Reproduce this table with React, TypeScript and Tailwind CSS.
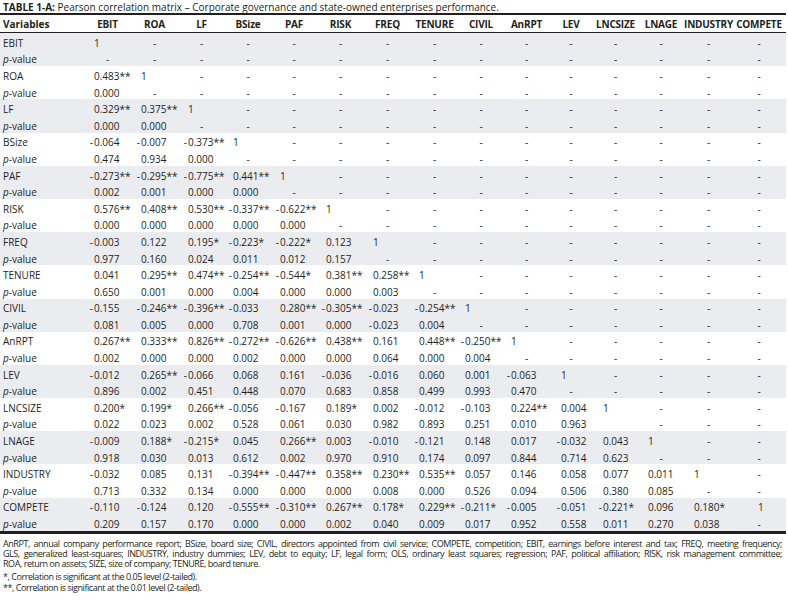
import React from "react";

const cols = ["EBIT","ROA","LF","BSize","PAF","RISK","FREQ","TENURE","CIVIL","AnRPT","LEV","LNCSIZE","LNAGE","INDUSTRY","COMPETE"];
const widths = ["w-[47px]","w-[47px]","w-[47px]","w-[46px]","w-[46px]","w-[47px]","w-[47px]","w-[47px]","w-[46px]","w-[45px]","w-[44px]","w-[45px]","w-[46px]","w-[49px]","w-[52px]"];
const pads = ["pl-[10px]","pl-[10px]","pl-[10px]","pl-[8px]","pl-[9px]","pl-[9px]","pl-[9px]","pl-[8px]","pl-[7px]","pl-[7px]","pl-[12px]","pl-[10px]","pl-[10px]","pl-[10px]","pl-[25px]"];

type Row = { name: string; r: string[]; p: string[] };
const data: Row[] = [
  { name: "EBIT", r: ["1"], p: ["-"] },
  { name: "ROA", r: ["0.483**","1"], p: ["0.000","-"] },
  { name: "LF", r: ["0.329**","0.375**","1"], p: ["0.000","0.000","-"] },
  { name: "BSize", r: ["-0.064","-0.007","-0.373**","1"], p: ["0.474","0.934","0.000","-"] },
  { name: "PAF", r: ["-0.273**","-0.295**","-0.775**","0.441**","1"], p: ["0.002","0.001","0.000","0.000","-"] },
  { name: "RISK", r: ["0.576**","0.408**","0.530**","-0.337**","-0.622**","1"], p: ["0.000","0.000","0.000","0.000","0.000","-"] },
  { name: "FREQ", r: ["-0.003","0.122","0.195*","-0.223*","-0.222*","0.123","1"], p: ["0.977","0.160","0.024","0.011","0.012","0.157","-"] },
  { name: "TENURE", r: ["0.041","0.295**","0.474**","-0.254**","-0.544*","0.381**","0.258**","1"], p: ["0.650","0.001","0.000","0.004","0.000","0.000","0.003","-"] },
  { name: "CIVIL", r: ["-0.155","-0.246**","-0.396**","-0.033","0.280**","-0.305**","-0.023","-0.254**","1"], p: ["0.081","0.005","0.000","0.708","0.001","0.000","-0.023","0.004","-"] },
  { name: "AnRPT", r: ["0.267**","0.333**","0.826**","-0.272**","-0.626**","0.438**","0.161","0.448**","-0.250**","1"], p: ["0.002","0.000","0.000","0.002","0.000","0.000","0.064","0.000","0.004","-"] },
  { name: "LEV", r: ["-0.012","0.265**","-0.066","0.068","0.161","-0.036","-0.016","0.060","0.001","-0.063","1"], p: ["0.896","0.002","0.451","0.448","0.070","0.683","0.858","0.499","0.993","0.470","-"] },
  { name: "LNCSIZE", r: ["0.200*","0.199*","0.266**","-0.056","-0.167","0.189*","0.002","-0.012","-0.103","0.224**","0.004","1"], p: ["0.022","0.023","0.002","0.528","0.061","0.030","0.982","0.893","0.251","0.010","0.963",""] },
  { name: "LNAGE", r: ["-0.009","0.188*","-0.215*","0.045","0.266**","0.003","-0.010","-0.121","0.148","0.017","-0.032","0.043","1"], p: ["0.918","0.030","0.013","0.612","0.002","0.970","0.910","0.174","0.097","0.844","0.714","0.623","-"] },
  { name: "INDUSTRY", r: ["-0.032","0.085","0.131","-0.394**","-0.447**","0.358**","0.230**","0.535**","0.057","0.146","0.058","0.077","0.011","1"], p: ["0.713","0.332","0.134","0.000","0.000","0.000","0.008","0.000","0.526","0.094","0.506","0.380","0.085","-"] },
  { name: "COMPETE", r: ["-0.110","-0.124","0.120","-0.555**","-0.310**","0.267**","0.178*","0.229**","-0.211*","-0.005","-0.051","-0.221*","0.096","0.180*","1"], p: ["0.209","0.157","0.170","0.000","0.000","0.002","0.040","0.009","0.017","0.952","0.558","0.011","0.270","0.038","-"] },
];

function Cell({ v, i }: { v: string; i: number }) {
  if (v === "-") {
    return <div className={`${widths[i]} shrink-0 text-center`}>-</div>;
  }
  if (v === "") return <div className={`${widths[i]} shrink-0`} />;
  const neg = v.startsWith("-");
  const body = neg ? v.slice(1) : v;
  return (
    <div className={`${widths[i]} ${pads[i]} shrink-0 whitespace-nowrap`}>
      <span className="relative">
        {neg && <span className="absolute right-full pr-[1px]">-</span>}
        {body}
      </span>
    </div>
  );
}

function DataRow({ label, vals, italicP }: { label: string; vals: string[]; italicP?: boolean }) {
  return (
    <div className="flex h-[16.6px] items-center pt-[3px]">
      <div className="w-[84px] shrink-0 pl-[3px] whitespace-nowrap">
        {italicP ? (<><span className="italic">p</span>-value</>) : label}
      </div>
      {cols.map((_, i) => (
        <Cell key={i} v={i < vals.length ? vals[i] : "-"} i={i} />
      ))}
    </div>
  );
}

export default function App() {
  return (
    <div className="w-[788px] h-[601px] bg-white text-[#231f20] font-['Open_Sans',sans-serif] text-[10px] leading-none overflow-hidden">
      <div className="h-[13px] flex items-center pl-[3px] pt-[1px] text-[10px] whitespace-nowrap">
        <span className="font-bold">TABLE 1-A:</span>
        <span>&nbsp;Pearson correlation matrix – Corporate governance and state-owned enterprises performance.</span>
      </div>
      <div className="w-[786px] border-t-[2px] border-[#231f20]" />
      <div className="w-[786px] flex h-[18px] items-center font-bold border-b border-[#231f20]">
        <div className="w-[84px] shrink-0 pl-[3px]">Variables</div>
        {cols.map((c, i) => (
          <div key={c} className={`${widths[i]} shrink-0 text-center whitespace-nowrap tracking-[-0.2px]`}>{c}</div>
        ))}
      </div>
      <div className="w-[786px]">
        {data.map((row, idx) => (
          <div key={row.name} className={idx % 2 === 0 ? "bg-[#ebecf0]" : "bg-white"}>
            <DataRow label={row.name} vals={row.r} />
            <DataRow label="p-value" vals={row.p} italicP />
          </div>
        ))}
      </div>
      <div className="w-[786px] border-t-[3px] border-[#231f20]" />
      <div className="mt-[5px] pl-[3px] w-[782px] text-[9px] tracking-[-0.45px] leading-[10px]">
        <div className="text-justify [text-align-last:justify] whitespace-nowrap">AnRPT, annual company performance report; BSize, board size; CIVIL, directors appointed from civil service; COMPETE, competition; EBIT, earnings before interest and tax; FREQ, meeting frequency;</div>
        <div className="text-justify [text-align-last:justify] whitespace-nowrap">GLS, generalized least-squares; INDUSTRY, industry dummies; LEV, debt to equity; LF, legal form; OLS, ordinary least squares; regression; PAF, political affiliation; RISK, risk management committee;</div>
        <div>ROA, return on assets; SIZE, size of company; TENURE, board tenure.</div>
        <div className="mt-[2.5px] leading-[11px]">*, Correlation is significant at the 0.05 level (2-tailed).</div>
        <div className="leading-[11px]">**, Correlation is significant at the 0.01 level (2-tailed).</div>
      </div>
    </div>
  );
}
